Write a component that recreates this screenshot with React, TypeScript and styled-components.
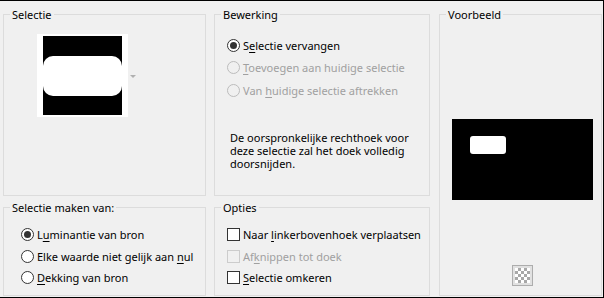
import React from 'react';
import styled, { createGlobalStyle } from 'styled-components';

const GlobalStyle = createGlobalStyle`
  html, body { margin: 0; padding: 0; background: #f0f0f0; }
  body {
    font-family: "Noto Sans", "Open Sans", sans-serif;
    font-size: 11px;
    color: #000;
  }
`;

const Window = styled.div`
  box-sizing: border-box;
  width: 604px;
  height: 298px;
  background: #f0f0f0;
  border-top: 1px solid #000;
  border-right: 1px solid #000;
  border-bottom: 1px solid #000;
  padding: 13px 1px 1px 3px;
  display: grid;
  grid-template-columns: 203px 8px 216px 9px 163px;
  grid-template-rows: 182px 89px;
  row-gap: 11px;
  grid-template-areas:
    "sel . bew . vb"
    "mak . opt . vb";
`;

const GroupBox = styled.section<{ $area: string }>`
  grid-area: ${(p) => p.$area};
  position: relative;
  box-sizing: border-box;
  border: 1px solid #dcdcdc;
  min-width: 0;
`;

const Caption = styled.span`
  position: absolute;
  top: -8px;
  left: 6px;
  padding: 0 2px;
  line-height: 15px;
  background: #f0f0f0;
  white-space: nowrap;
`;

const SelectionGroup = styled(GroupBox)`
  padding: 19px 0 0 33px;
`;

const Dropdown = styled.div`
  display: flex;
  align-items: center;
  gap: 2px;
`;

const ThumbFrame = styled.div`
  width: 91px;
  height: 83px;
  background: #fff;
  display: flex;
  align-items: center;
  justify-content: center;
`;

const Thumb = styled.div`
  width: 79px;
  height: 79px;
  background: #000;
  display: flex;
  align-items: center;
`;

const ThumbShape = styled.div`
  width: 100%;
  height: 40px;
  margin-top: 1px;
  background: #fff;
  border-radius: 10px;
`;

const DropArrow = styled.div`
  width: 0;
  height: 0;
  margin-top: 1px;
  border-left: 3px solid transparent;
  border-right: 3px solid transparent;
  border-top: 3px solid #b0b0b0;
`;

const EditGroup = styled(GroupBox)`
  padding: 19px 0 0 12px;
`;

const OptionList = styled.div<{ $row: number }>`
  display: flex;
  flex-direction: column;
  & > * { height: ${(p) => p.$row}px; }
`;

const OptionRow = styled.label<{ $disabled?: boolean }>`
  display: flex;
  align-items: center;
  gap: 3px;
  line-height: 15px;
  white-space: nowrap;
  color: ${(p) => (p.$disabled ? '#a0a0a0' : '#000')};
`;

const RadioMark = styled.span<{ $checked?: boolean; $disabled?: boolean }>`
  box-sizing: border-box;
  width: 13px;
  height: 13px;
  flex: none;
  border-radius: 50%;
  border: 1px solid ${(p) => (p.$disabled ? '#bcbcbc' : '#333')};
  background: ${(p) => (p.$disabled ? '#f0f0f0' : '#fff')};
  display: flex;
  align-items: center;
  justify-content: center;
  &::after {
    content: '';
    display: ${(p) => (p.$checked ? 'block' : 'none')};
    width: 7px;
    height: 7px;
    border-radius: 50%;
    background: #333;
  }
`;

const CheckMark = styled.span<{ $disabled?: boolean }>`
  box-sizing: border-box;
  width: 13px;
  height: 13px;
  flex: none;
  border: 1px solid ${(p) => (p.$disabled ? '#cccccc' : '#333')};
  background: ${(p) => (p.$disabled ? '#f0f0f0' : '#fff')};
`;

const Key = styled.u`
  text-decoration-thickness: 1px;
  text-underline-offset: 2px;
`;

const Description = styled.p`
  margin: 29px 0 0 3px;
  line-height: 13px;
`;

const SourceGroup = styled(GroupBox)`
  padding: 16px 0 0 17px;
`;

const OptionsGroup = styled(GroupBox)`
  padding: 16px 0 0 12px;
`;

const PreviewGroup = styled(GroupBox)`
  padding: 104px 0 0 12px;
`;

const PreviewColumn = styled.div`
  width: 141px;
  display: flex;
  flex-direction: column;
  align-items: center;
`;

const PreviewCanvas = styled.div`
  box-sizing: border-box;
  width: 141px;
  height: 81px;
  background: #000;
  padding: 17px 0 0 18px;
`;

const PreviewShape = styled.div`
  width: 36px;
  height: 18px;
  background: #fff;
  border-radius: 3px;
`;

const CheckerButton = styled.button`
  box-sizing: border-box;
  width: 21px;
  height: 21px;
  margin-top: 65px;
  padding: 0;
  border: 1px solid #adadad;
  background: #e1e1e1;
  display: flex;
  align-items: center;
  justify-content: center;
`;

const Checker = styled.span`
  width: 15px;
  height: 15px;
  background: repeating-conic-gradient(#a8a8a8 0 25%, #ffffff 0 50%) 0 0 / 6px 6px;
`;

type Opt = { pre: string; hot: string; post: string; checked?: boolean; disabled?: boolean };

const Radio: React.FC<Opt> = ({ pre, hot, post, checked, disabled }) => (
  <OptionRow $disabled={disabled}>
    <RadioMark $checked={checked} $disabled={disabled} />
    <span>
      {pre}
      <Key>{hot}</Key>
      {post}
    </span>
  </OptionRow>
);

const Check: React.FC<Opt> = ({ pre, hot, post, disabled }) => (
  <OptionRow $disabled={disabled}>
    <CheckMark $disabled={disabled} />
    <span>
      {pre}
      <Key>{hot}</Key>
      {post}
    </span>
  </OptionRow>
);

export default function App() {
  return (
    <>
      <GlobalStyle />
      <Window>
        <SelectionGroup $area="sel">
          <Caption>Selectie</Caption>
          <Dropdown>
            <ThumbFrame>
              <Thumb>
                <ThumbShape />
              </Thumb>
            </ThumbFrame>
            <DropArrow />
          </Dropdown>
        </SelectionGroup>

        <EditGroup $area="bew">
          <Caption>Bewerking</Caption>
          <OptionList $row={22.5}>
            <Radio pre="S" hot="e" post="lectie vervangen" checked />
            <Radio pre="" hot="T" post="oevoegen aan huidige selectie" disabled />
            <Radio pre="Van " hot="h" post="uidige selectie aftrekken" disabled />
          </OptionList>
          <Description>
            De oorspronkelijke rechthoek voor
            <br />
            deze selectie zal het doek volledig
            <br />
            doorsnijden.
          </Description>
        </EditGroup>

        <PreviewGroup $area="vb">
          <Caption>Voorbeeld</Caption>
          <PreviewColumn>
            <PreviewCanvas>
              <PreviewShape />
            </PreviewCanvas>
            <CheckerButton aria-label="Transparantie">
              <Checker />
            </CheckerButton>
          </PreviewColumn>
        </PreviewGroup>

        <SourceGroup $area="mak">
          <Caption>Selectie maken van:</Caption>
          <OptionList $row={21.5}>
            <Radio pre="L" hot="u" post="minantie van bron" checked />
            <Radio pre="Elke waarde niet gelijk aan " hot="n" post="ul" />
            <Radio pre="" hot="D" post="ekking van bron" />
          </OptionList>
        </SourceGroup>

        <OptionsGroup $area="opt">
          <Caption>Opties</Caption>
          <OptionList $row={21.5}>
            <Check pre="Naar " hot="l" post="inkerbovenhoek verplaatsen" />
            <Check pre="Af" hot="k" post="nippen tot doek" disabled />
            <Check pre="" hot="S" post="electie omkeren" />
          </OptionList>
        </OptionsGroup>
      </Window>
    </>
  );
}
